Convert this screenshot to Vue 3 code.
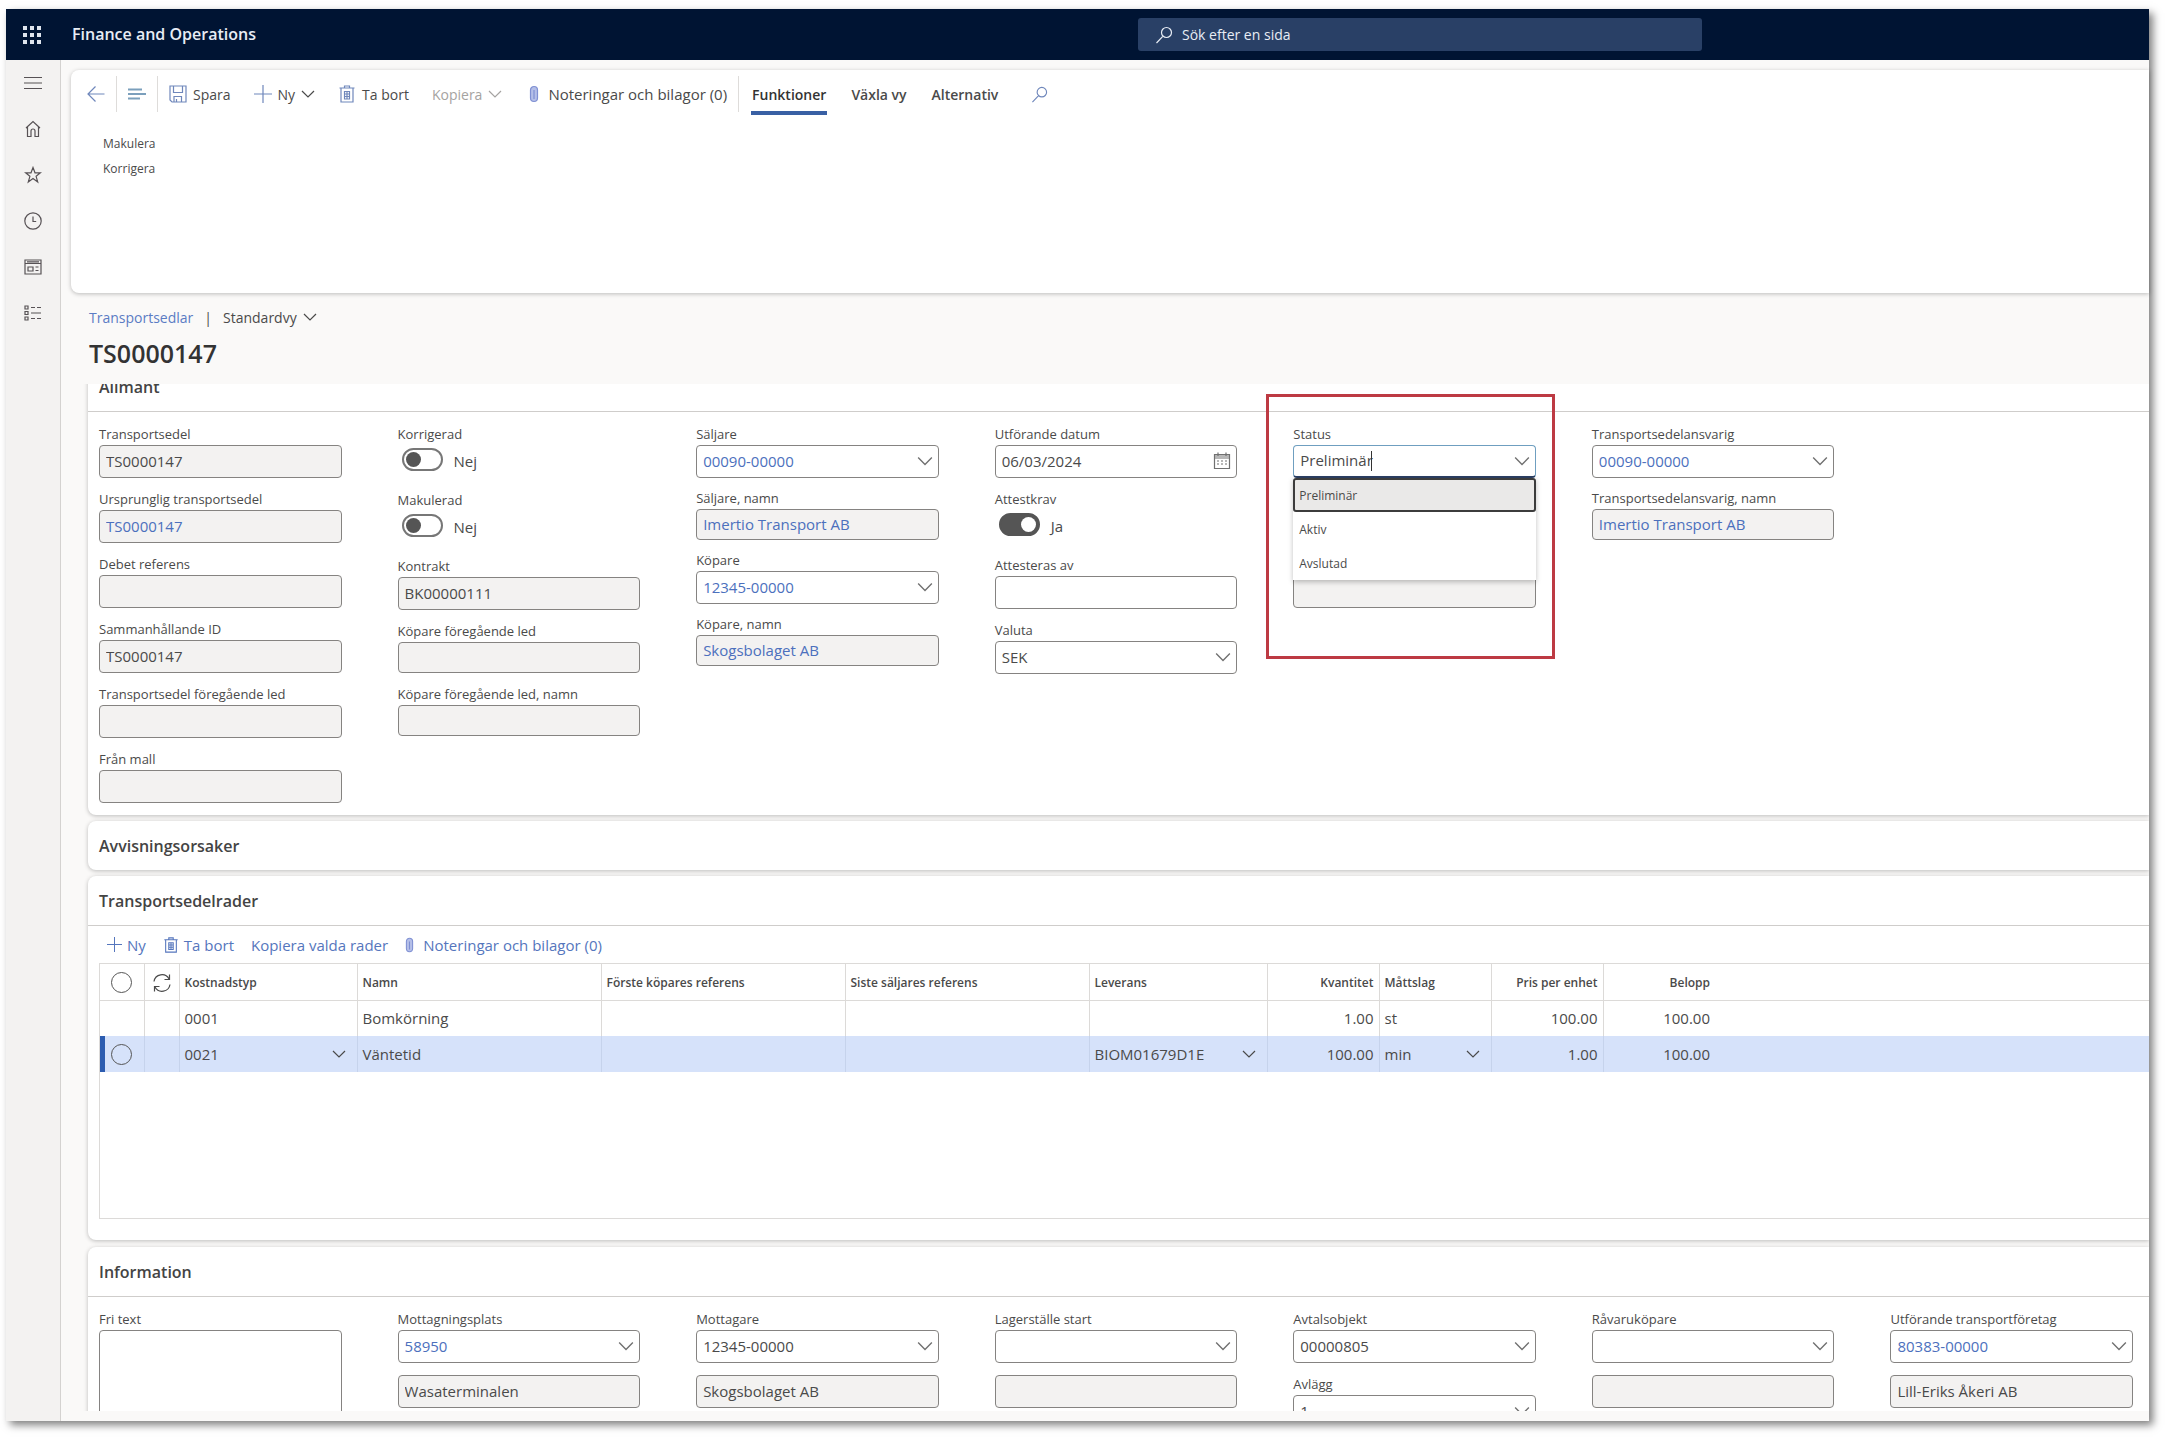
<template>
  <div class="page">
    <div class="window">
      <!-- Top bar -->
      <header class="topbar">
        <button class="waffle" type="button" aria-label="Appar">
          <svg viewBox="0 0 18 18" width="18" height="18"><path :d="icons.waffle" /></svg>
        </button>
        <span class="brand">Finance and Operations</span>
        <label class="search">
          <svg class="icon" viewBox="0 0 18 18" width="18" height="18"><path :d="icons.search" /></svg>
          <input type="search" placeholder="Sök efter en sida" aria-label="Sök efter en sida" />
        </label>
      </header>

      <div class="shell">
        <!-- Side navigation -->
        <nav class="sidebar">
          <button v-for="item in nav" :key="item.icon" type="button" :aria-label="item.label">
            <svg class="icon" viewBox="0 0 18 18" width="18" height="18"><path :d="icons[item.icon]" /></svg>
          </button>
        </nav>

        <main class="main">
          <!-- Action pane -->
          <section class="action-pane">
            <div class="action-row">
              <button type="button" aria-label="Tillbaka">
                <svg class="icon blue" viewBox="0 0 18 18" width="18" height="18"><path :d="icons.back" /></svg>
              </button>
              <span class="divider"></span>
              <button type="button" aria-label="Lista">
                <svg class="icon teal" viewBox="0 0 18 18" width="18" height="18"><path :d="icons.lines" /></svg>
              </button>
              <span class="divider"></span>
              <button type="button">
                <svg class="icon blue" viewBox="0 0 18 18" width="18" height="18"><path :d="icons.save" /></svg>
                Spara
              </button>
              <button type="button">
                <svg class="icon blue" viewBox="0 0 18 18" width="18" height="18"><path :d="icons.plus" /></svg>
                Ny
                <svg class="icon" viewBox="0 0 14 14" width="14" height="14"><path :d="icons.chevron" /></svg>
              </button>
              <button type="button">
                <svg class="icon blue" viewBox="0 0 18 18" width="18" height="18"><path :d="icons.trash" /></svg>
                Ta bort
              </button>
              <button type="button" disabled>
                Kopiera
                <svg class="icon" viewBox="0 0 14 14" width="14" height="14"><path :d="icons.chevron" /></svg>
              </button>
              <button type="button" class="notes">
                <svg class="icon clip" viewBox="0 0 10 18" width="10" height="18"><path :d="icons.clip" /></svg>
                Noteringar och bilagor (0)
              </button>
              <span class="divider"></span>
              <button type="button" class="tab active">Funktioner</button>
              <button type="button" class="tab">Växla vy</button>
              <button type="button" class="tab">Alternativ</button>
              <button type="button" class="pane-search" aria-label="Sök">
                <svg class="icon blue" viewBox="0 0 18 18" width="17" height="17"><path :d="icons.search" /></svg>
              </button>
            </div>
            <div class="action-group">
              <button type="button">Makulera</button>
              <button type="button">Korrigera</button>
            </div>
          </section>

          <!-- Record heading -->
          <div class="record-head">
            <div class="crumbs">
              <a href="#">Transportsedlar</a>
              <span class="bar">|</span>
              <button type="button">
                Standardvy
                <svg class="icon" viewBox="0 0 14 14" width="14" height="14"><path :d="icons.chevron" /></svg>
              </button>
            </div>
            <h1>TS0000147</h1>
          </div>

          <div class="record-body">
            <!-- General -->
            <section class="card scrolled">
              <h2 class="card-title open">Allmänt</h2>
              <div class="fields">
                <div
                  v-for="(column, c) in general"
                  :key="c"
                  class="column"
                  :class="{ tight: column.tight }"
                >
                  <div v-for="(field, f) in column.fields" :key="f" class="field">
                    <label :for="`general-${c}-${f}`">{{ field.label }}</label>
                    <div v-if="field.type === 'toggle'" class="toggle">
                      <input :id="`general-${c}-${f}`" v-model="field.on" type="checkbox" role="switch" />
                      <span>{{ field.on ? 'Ja' : 'Nej' }}</span>
                    </div>
                    <div v-else-if="field.type === 'select'" class="control">
                      <select :id="`general-${c}-${f}`" :class="{ link: field.link }">
                        <option>{{ field.value }}</option>
                      </select>
                      <svg class="icon" viewBox="0 0 14 14" width="16" height="16"><path :d="icons.chevron" /></svg>
                    </div>
                    <div v-else-if="field.type === 'combo'" class="control">
                      <input
                        :id="`general-${c}-${f}`"
                        v-model="field.value"
                        class="focused"
                        type="text"
                        role="combobox"
                        aria-expanded="true"
                      />
                      <span class="caret"></span>
                      <svg class="icon" viewBox="0 0 14 14" width="16" height="16"><path :d="icons.chevron" /></svg>
                      <ul class="menu" role="listbox">
                        <li
                          v-for="option in statuses"
                          :key="option"
                          role="option"
                          :class="{ selected: option === field.value }"
                          @click="field.value = option"
                        >
                          {{ option }}
                        </li>
                      </ul>
                    </div>
                    <div v-else class="control">
                      <input
                        :id="`general-${c}-${f}`"
                        type="text"
                        :value="field.value"
                        :readonly="field.type !== 'text' && field.type !== 'date'"
                        :class="{ link: field.link, short: field.short }"
                        :aria-label="field.name"
                      />
                      <svg v-if="field.type === 'date'" class="icon calendar" viewBox="0 0 18 18" width="18" height="18">
                        <path :d="icons.calendar" />
                      </svg>
                    </div>
                  </div>
                  <div v-if="column.marked" class="marker"></div>
                </div>
              </div>
            </section>

            <section class="card">
              <h2 class="card-title">Avvisningsorsaker</h2>
            </section>

            <!-- Lines -->
            <section class="card lines-card">
              <h2 class="card-title open">Transportsedelrader</h2>
              <div class="line-actions">
                <button type="button">
                  <svg class="icon" viewBox="0 0 18 18" width="15" height="15"><path :d="icons.plus" /></svg>
                  Ny
                </button>
                <button type="button">
                  <svg class="icon" viewBox="0 0 18 18" width="16" height="16"><path :d="icons.trash" /></svg>
                  Ta bort
                </button>
                <button type="button">Kopiera valda rader</button>
                <button type="button" class="notes">
                  <svg class="icon clip" viewBox="0 0 10 18" width="9" height="16"><path :d="icons.clip" /></svg>
                  Noteringar och bilagor (0)
                </button>
              </div>
              <div class="grid">
                <table>
                  <colgroup>
                    <col class="w-mark" />
                    <col class="w-sync" />
                    <col class="w-type" />
                    <col class="w-ref" />
                    <col class="w-ref" />
                    <col class="w-ref" />
                    <col class="w-type" />
                    <col class="w-num" />
                    <col class="w-num" />
                    <col class="w-num" />
                    <col class="w-num" />
                    <col />
                  </colgroup>
                  <thead>
                    <tr>
                      <th class="mark"><input type="radio" name="line" aria-label="Markera alla" /></th>
                      <th class="mark">
                        <svg class="icon" viewBox="0 0 20 20" width="20" height="20"><path :d="icons.sync" /></svg>
                      </th>
                      <th v-for="col in columns" :key="col.key" :class="{ num: col.num, last: col.last }">
                        {{ col.label }}
                      </th>
                      <th class="last"></th>
                    </tr>
                  </thead>
                  <tbody>
                    <tr v-for="row in rows" :key="row.type" :class="{ current: row.current }">
                      <td class="mark">
                        <input v-if="row.current" type="radio" name="line" aria-label="Markera rad" />
                      </td>
                      <td></td>
                      <td v-for="col in columns" :key="col.key" :class="{ num: col.num, last: col.last }">
                        <div class="cell">
                          {{ row[col.key] }}
                          <svg
                            v-if="row.current && col.lookup"
                            class="icon"
                            viewBox="0 0 14 14"
                            width="14"
                            height="14"
                          >
                            <path :d="icons.chevron" />
                          </svg>
                        </div>
                      </td>
                      <td class="last"></td>
                    </tr>
                  </tbody>
                </table>
              </div>
            </section>

            <!-- Information -->
            <section class="card">
              <h2 class="card-title open">Information</h2>
              <div class="fields">
                <div v-for="(column, c) in information" :key="c" class="column">
                  <div v-for="(field, f) in column" :key="f" class="field">
                    <label v-if="field.label" :for="`info-${c}-${f}`">{{ field.label }}</label>
                    <textarea v-if="field.type === 'area'" :id="`info-${c}-${f}`"></textarea>
                    <div v-else-if="field.type === 'select'" class="control">
                      <select :id="`info-${c}-${f}`" :class="{ link: field.link }">
                        <option>{{ field.value }}</option>
                      </select>
                      <svg class="icon" viewBox="0 0 14 14" width="16" height="16"><path :d="icons.chevron" /></svg>
                    </div>
                    <div v-else class="control">
                      <input :id="`info-${c}-${f}`" type="text" readonly :value="field.value" :aria-label="field.name" />
                    </div>
                  </div>
                </div>
              </div>
            </section>
          </div>
        </main>
      </div>
    </div>
  </div>
</template>

<script setup>
import { reactive } from 'vue'

const icons = {
  waffle:
    'M0 0h4v4h-4z M7 0h4v4h-4z M14 0h4v4h-4z M0 7h4v4h-4z M7 7h4v4h-4z M14 7h4v4h-4z M0 14h4v4h-4z M7 14h4v4h-4z M14 14h4v4h-4z',
  search: 'M11.5 1.5a5 5 0 1 1 0 10a5 5 0 0 1 0-10z M8 10.2L1.5 17',
  menu: 'M0 3.5h18 M0 9h18 M0 14.5h18',
  home: 'M2 8L9 1.5L16 8 M3.5 7v9.5h3.5v-5.5a2 2 0 0 1 4 0v5.5h3.5v-9.5',
  star: 'M9 1.5l2 5.3h5.5l-4.4 3.5l1.6 5.7l-4.7-3.4l-4.7 3.4l1.6-5.7l-4.4-3.5h5.5z',
  clock: 'M9 .8a8.2 8.2 0 1 1 0 16.4a8.2 8.2 0 0 1 0-16.4z M9 4.5v5h3.2',
  workspace: 'M1 2h16v14h-16z M1 5.5h16 M4 9h5v4h-5z M11.5 9h3 M11.5 12.5h3 M3 3.8h12',
  modules: 'M1 2h3v3h-3z M1 7.5h3v3h-3z M1 13h3v3h-3z M7 3.5h4 M13 3.5h4 M7 9h10 M7 14.5h4 M13 14.5h4',
  back: 'M17.5 9h-16.5 M8.5 1.5L1 9l7.5 7.5',
  lines: 'M0 4.5h14 M0 9h18 M0 13.5h12',
  save: 'M1 1h16v16h-14l-2-2z M4.5 1v6.5h9v-6.5 M5 17v-5.5h7.5v5.5 M7.5 14v3',
  plus: 'M9 0v18 M0 9h18',
  trash: 'M1.5 3h15 M6.5 3v-2h5v2 M3 3v14h12v-14 M6.5 6.5h5v7.5h-5z M9 6.5v7.5 M6.5 9h5 M6.5 11.5h5',
  clip: 'M1.5 5a3.5 3.5 0 0 1 7 0v8a3.5 3.5 0 0 1-7 0z M5 5v9',
  chevron: 'M1 4l6 6l6-6',
  calendar: 'M1.5 2.5h15v14h-15z M1.5 4h15 M1.5 6h15 M5 .5v4 M13 .5v4 M4 9h2 M8 9h2 M12 9h2 M4 12h2 M8 12h2 M12 12h2',
  sync: 'M2 8.5a8 8 0 0 1 15-2.5 M17.5 1.5v5h-5 M18 11.5a8 8 0 0 1-15 2.5 M2.5 18.5v-5h5'
}

const nav = [
  { icon: 'menu', label: 'Meny' },
  { icon: 'home', label: 'Start' },
  { icon: 'star', label: 'Favoriter' },
  { icon: 'clock', label: 'Senaste' },
  { icon: 'workspace', label: 'Arbetsytor' },
  { icon: 'modules', label: 'Moduler' }
]

const statuses = ['Preliminär', 'Aktiv', 'Avslutad']

const general = reactive([
  {
    fields: [
      { label: 'Transportsedel', value: 'TS0000147' },
      { label: 'Ursprunglig transportsedel', value: 'TS0000147', link: true },
      { label: 'Debet referens', value: '' },
      { label: 'Sammanhållande ID', value: 'TS0000147' },
      { label: 'Transportsedel föregående led', value: '' },
      { label: 'Från mall', value: '' }
    ]
  },
  {
    fields: [
      { label: 'Korrigerad', type: 'toggle', on: false },
      { label: 'Makulerad', type: 'toggle', on: false },
      { label: 'Kontrakt', value: 'BK00000111' },
      { label: 'Köpare föregående led', value: '', short: true },
      { label: 'Köpare föregående led, namn', value: '', short: true }
    ]
  },
  {
    tight: true,
    fields: [
      { label: 'Säljare', value: '00090-00000', type: 'select', link: true },
      { label: 'Säljare, namn', value: 'Imertio Transport AB', link: true, short: true },
      { label: 'Köpare', value: '12345-00000', type: 'select', link: true },
      { label: 'Köpare, namn', value: 'Skogsbolaget AB', link: true, short: true }
    ]
  },
  {
    fields: [
      { label: 'Utförande datum', value: '06/03/2024', type: 'date' },
      { label: 'Attestkrav', type: 'toggle', on: true },
      { label: 'Attesteras av', value: '', type: 'text' },
      { label: 'Valuta', value: 'SEK', type: 'select' }
    ]
  },
  {
    marked: true,
    fields: [
      { label: 'Status', value: 'Preliminär', type: 'combo' },
      { label: '', name: 'Orsak', value: '' },
      { label: '', name: 'Kommentar', value: '' }
    ]
  },
  {
    tight: true,
    fields: [
      { label: 'Transportsedelansvarig', value: '00090-00000', type: 'select', link: true },
      { label: 'Transportsedelansvarig, namn', value: 'Imertio Transport AB', link: true, short: true }
    ]
  }
])

const columns = [
  { key: 'type', label: 'Kostnadstyp', lookup: true },
  { key: 'name', label: 'Namn' },
  { key: 'buyerRef', label: 'Förste köpares referens' },
  { key: 'sellerRef', label: 'Siste säljares referens' },
  { key: 'delivery', label: 'Leverans', lookup: true },
  { key: 'quantity', label: 'Kvantitet', num: true },
  { key: 'unit', label: 'Måttslag', lookup: true },
  { key: 'price', label: 'Pris per enhet', num: true },
  { key: 'amount', label: 'Belopp', num: true, last: true }
]

const rows = [
  { type: '0001', name: 'Bomkörning', quantity: '1.00', unit: 'st', price: '100.00', amount: '100.00' },
  {
    type: '0021',
    name: 'Väntetid',
    delivery: 'BIOM01679D1E',
    quantity: '100.00',
    unit: 'min',
    price: '1.00',
    amount: '100.00',
    current: true
  }
]

const information = [
  [{ label: 'Fri text', type: 'area' }],
  [
    { label: 'Mottagningsplats', value: '58950', type: 'select', link: true },
    { name: 'Mottagningsplats, namn', value: 'Wasaterminalen' }
  ],
  [
    { label: 'Mottagare', value: '12345-00000', type: 'select' },
    { name: 'Mottagare, namn', value: 'Skogsbolaget AB' }
  ],
  [
    { label: 'Lagerställe start', value: '', type: 'select' },
    { name: 'Lagerställe start, namn', value: '' }
  ],
  [
    { label: 'Avtalsobjekt', value: '00000805', type: 'select' },
    { label: 'Avlägg', value: '1', type: 'select' }
  ],
  [
    { label: 'Råvaruköpare', value: '', type: 'select' },
    { name: 'Råvaruköpare, namn', value: '' }
  ],
  [
    { label: 'Utförande transportföretag', value: '80383-00000', type: 'select', link: true },
    { name: 'Utförande transportföretag, namn', value: 'Lill-Eriks Åkeri AB' }
  ]
]
</script>

<style>
body {
  margin: 0;
  background: #fff;
}
</style>

<style scoped>
* {
  box-sizing: border-box;
}

.page {
  height: 100vh;
  padding: 9px 23px 24px 6px;
  overflow: hidden;
  font-family: "Open Sans", "Noto Sans", sans-serif;
  font-size: 15px;
  color: #4a4a4a;
}

.window {
  height: 100%;
  display: flex;
  flex-direction: column;
  background: #faf9f8;
  box-shadow: 4px 4px 8px rgba(0, 0, 0, 0.5);
}

button {
  display: flex;
  align-items: center;
  gap: 6px;
  padding: 0;
  border: 0;
  background: none;
  font: inherit;
  color: inherit;
  white-space: nowrap;
}

input,
select,
textarea {
  font: inherit;
  color: inherit;
}

.icon {
  display: block;
  flex: none;
  fill: none;
  stroke: currentColor;
  stroke-width: 1.2;
}

.blue {
  color: #6f87bb;
}

.teal {
  color: #7b9fbc;
  stroke-width: 1.8;
}

.clip {
  color: #7f90d3;
  fill: #b5bfe8;
}

/* Top bar */
.topbar {
  position: relative;
  display: flex;
  align-items: center;
  flex: none;
  height: 51px;
  padding-left: 17px;
  background: #001433;
  color: #e8edf5;
}

.waffle svg {
  display: block;
  fill: #dfe5ee;
}

.brand {
  margin-left: 31px;
  padding-bottom: 2px;
  font-size: 16px;
  font-weight: 600;
}

.search {
  position: absolute;
  left: 1132px;
  width: 564px;
  height: 33px;
  display: flex;
  align-items: center;
  gap: 9px;
  padding: 0 17px;
  border-radius: 3px;
  background: #294066;
}

.search input {
  flex: 1;
  min-width: 0;
  padding: 0;
  border: 0;
  outline: 0;
  background: none;
  font-size: 14px;
}

.search input::placeholder {
  color: #e8edf5;
}

.shell {
  flex: 1;
  min-height: 0;
  display: flex;
}

/* Side navigation */
.sidebar {
  flex: none;
  width: 55px;
  padding-top: 14px;
  border-right: 1px solid #d4d2d0;
  background: #f3f2f1;
  color: #575255;
}

.sidebar button {
  width: 100%;
  height: 18px;
  margin-bottom: 28px;
  justify-content: center;
}

.main {
  flex: 1;
  min-width: 0;
  display: flex;
  flex-direction: column;
  padding: 10px 0;
}

/* Action pane */
.action-pane {
  flex: none;
  height: 223px;
  margin-left: 10px;
  border-radius: 8px 0 0 8px;
  background: #fff;
  box-shadow: 0 1px 4px rgba(0, 0, 0, 0.25);
}

.action-row {
  display: flex;
  align-items: center;
  gap: 23px;
  height: 48px;
  padding-left: 16px;
  font-size: 14px;
}

.action-row button:disabled {
  color: #a5a3a1;
}

.divider {
  width: 1px;
  height: 36px;
  margin: 0 -12px;
  background: #dedcda;
}

.action-row .notes,
.line-actions .notes {
  gap: 9px;
}

.action-row .notes {
  margin-left: 4px;
  font-size: 15px;
}

.tab {
  position: relative;
  margin-left: 2px;
  font-weight: 600;
}

.tab.active {
  color: #333;
}

.tab.active::after {
  content: "";
  position: absolute;
  left: -1px;
  right: -1px;
  top: 26px;
  height: 4px;
  background: #3960a4;
}

.pane-search {
  margin-left: 10px;
}

.action-group {
  display: flex;
  flex-direction: column;
  align-items: flex-start;
  padding: 13px 0 0 32px;
  font-size: 12px;
}

.action-group button {
  height: 25px;
}

/* Record heading */
.record-head {
  flex: none;
  height: 91px;
  padding: 13px 0 0 28px;
}

.crumbs {
  display: flex;
  align-items: center;
  gap: 11px;
  height: 22px;
  font-size: 14px;
}

.crumbs a {
  color: #5b7cc4;
  text-decoration: none;
}

h1 {
  margin: 5px 0 0;
  font-size: 25px;
  line-height: 40px;
  font-weight: 600;
  color: #333;
}

.record-body {
  flex: 1;
  min-height: 0;
  overflow: hidden;
  padding-left: 27px;
}

.card {
  margin-bottom: 6px;
  border-radius: 8px 0 0 8px;
  background: #fff;
  box-shadow: 0 1px 4px rgba(0, 0, 0, 0.25);
}

/* the first card is scrolled partly under the heading */
.card.scrolled {
  margin-top: -22px;
}

.card.scrolled .fields {
  padding-bottom: 12px;
}

.card-title {
  margin: 0;
  padding: 2px 11px 0;
  font-size: 16px;
  line-height: 47px;
  font-weight: 600;
  color: #444;
}

.card-title.open {
  border-bottom: 1px solid #cfcdcb;
}

/* Fields */
.fields {
  display: grid;
  grid-template-columns: repeat(7, 1fr);
  column-gap: 56px;
  padding: 13px 16px 13px 11px;
}

.column {
  position: relative;
  display: flex;
  flex-direction: column;
  gap: 12px;
  min-width: 0;
}

.column.tight {
  gap: 11px;
}

.field label {
  display: block;
  height: 20px;
  font-size: 13px;
  line-height: 19px;
  white-space: nowrap;
}

.control {
  position: relative;
}

.control input,
.control select,
textarea {
  display: block;
  width: 100%;
  height: 33px;
  padding: 0 6px 2px;
  border: 1px solid #858381;
  border-radius: 4px;
  outline: 0;
  background: #fff;
  appearance: none;
}

.control input[readonly] {
  background: #f3f2f1;
}

.control input.short {
  height: 31px;
}

.control .link {
  color: #4c70bd;
}

.control input.focused {
  border-color: #6f9fc0;
  border-bottom: 2px solid #2b3f63;
}

.control .icon {
  position: absolute;
  right: 6px;
  top: 8px;
  color: #707070;
  pointer-events: none;
}

.control .calendar {
  top: 7px;
}

textarea {
  height: 97px;
  resize: none;
}

.toggle {
  display: flex;
  gap: 11px;
  height: 34px;
  padding: 3px 4px 0;
  line-height: 26px;
}

.toggle input {
  width: 41px;
  height: 23px;
  margin: 0;
  padding: 2px;
  border: 2px solid #777;
  border-radius: 12px;
  background: #fff;
  appearance: none;
}

.toggle input::before {
  content: "";
  display: block;
  width: 15px;
  height: 15px;
  border-radius: 50%;
  background: #555;
}

.toggle input:checked {
  border-color: #555;
  background: #555;
}

.toggle input:checked::before {
  margin-left: 18px;
  background: #fff;
}

.caret {
  position: absolute;
  left: 78px;
  top: 6px;
  width: 1px;
  height: 20px;
  background: #333;
}

.menu {
  position: absolute;
  z-index: 1;
  top: 33px;
  left: 0;
  right: 0;
  margin: 0;
  padding: 0;
  list-style: none;
  background: #fff;
  box-shadow: 0 2px 5px rgba(0, 0, 0, 0.25);
  font-size: 12px;
}

.menu li {
  height: 34px;
  padding: 0 6px;
  line-height: 36px;
}

.menu li.selected {
  padding: 0 4px;
  border: 2px solid #3c3c3c;
  border-radius: 3px;
  background: #eae9e8;
  line-height: 31px;
}

/* red frame round the status field */
.marker {
  position: absolute;
  top: -31px;
  left: -27px;
  right: -19px;
  height: 265px;
  border: 3px solid #bd3a43;
  pointer-events: none;
}

/* Lines */
.lines-card {
  padding-bottom: 21px;
  margin-bottom: 7px;
}

.line-actions {
  display: flex;
  align-items: center;
  gap: 17px;
  height: 37px;
  padding-left: 19px;
  color: #5576bd;
}

.line-actions button {
  gap: 5px;
}

.grid {
  min-height: 256px;
  margin-left: 11px;
  border: 1px solid #dcdad8;
  border-right: 0;
}

table {
  width: 100%;
  table-layout: fixed;
  border-collapse: collapse;
}

.w-mark {
  width: 44px;
}

.w-sync {
  width: 35px;
}

.w-type {
  width: 178px;
}

.w-ref {
  width: 244px;
}

.w-num {
  width: 112px;
}

th,
td {
  height: 36px;
  padding: 0 5px;
  border-right: 1px solid #dcdad8;
  border-bottom: 1px solid #dcdad8;
  text-align: left;
  white-space: nowrap;
}

td {
  border-bottom: 0;
}

th {
  padding-top: 2px;
  font-size: 12px;
  font-weight: 600;
}

th.last,
td.last {
  border-right: 0;
}

.num {
  text-align: right;
}

.num .cell {
  justify-content: flex-end;
}

.cell {
  display: flex;
  align-items: center;
  justify-content: space-between;
}

td .icon {
  margin-right: 6px;
}

.mark input {
  display: block;
  width: 21px;
  height: 21px;
  margin: 0 auto;
  border: 1px solid #555;
  border-radius: 50%;
  appearance: none;
}

.mark .icon {
  margin: 0 auto;
}

.current td {
  background: #d6e2fa;
  border-color: #c6d3ec;
}

.current td:first-child {
  box-shadow: inset 5px 0 #2c5cb0;
}
</style>
